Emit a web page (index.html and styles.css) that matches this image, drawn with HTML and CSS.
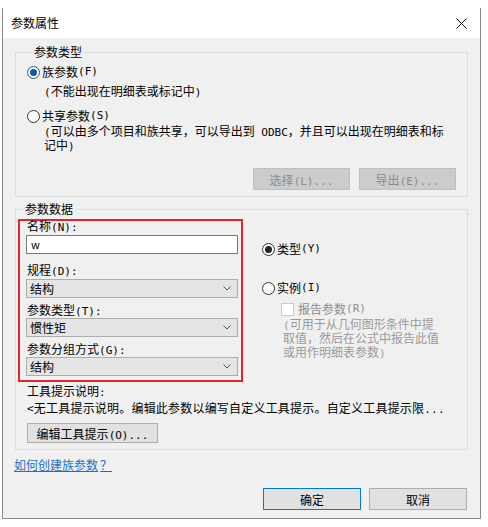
FILE: index.html
```html
<!DOCTYPE html>
<html lang="zh-CN">

<head>
    <meta charset="UTF-8" />
    <title>参数属性</title>
    <link rel="stylesheet" href="styles.css">
</head>

<body>
    <div class="dialog">
        <div class="titlebar">
            <span class="title">参数属性</span>
            <svg class="close" width="11" height="11" viewBox="0 0 11 11">
                <path d="M0.5 0.5 L10.5 10.5 M10.5 0.5 L0.5 10.5" stroke="#111" stroke-width="1" fill="none" />
            </svg>
        </div>

        <div class="content">
            <fieldset class="group type-group">
                <legend>参数类型</legend>
                <div class="option first">
                    <span class="radio checked focus"></span>族参数<span class="m">(F)</span>
                </div>
                <div class="note"><span class="m">(</span>不能出现在明细表或标记中<span class="m">)</span></div>
                <div class="option shared">
                    <span class="radio"></span>共享参数<span class="m">(S)</span>
                </div>
                <div class="note"><span class="m">(</span>可以由多个项目和族共享，可以导出到<span class="m"> ODBC</span>，并且可以出现在明细表和标<br>记中<span class="m">)</span></div>
                <div class="row-buttons">
                    <button class="btn disabled">选择<span class="m">(L)...</span></button>
                    <button class="btn disabled">导出<span class="m">(E)...</span></button>
                </div>
            </fieldset>

            <fieldset class="group data-group">
                <legend>参数数据</legend>
                <div class="data-grid">
                    <div class="fields">
                        <label class="field-label name-label">名称<span class="m">(N):</span></label>
                        <div class="textbox">w</div>

                        <label class="field-label gap-big">规程<span class="m">(D):</span></label>
                        <div class="select">结构
                            <svg width="8" height="5" viewBox="0 0 8 5"><path d="M0.5 0.5 L4 4 L7.5 0.5" stroke="#555" fill="none" /></svg>
                        </div>

                        <label class="field-label">参数类型<span class="m">(T):</span></label>
                        <div class="select">惯性矩
                            <svg width="8" height="5" viewBox="0 0 8 5"><path d="M0.5 0.5 L4 4 L7.5 0.5" stroke="#555" fill="none" /></svg>
                        </div>

                        <label class="field-label">参数分组方式<span class="m">(G):</span></label>
                        <div class="select">结构
                            <svg width="8" height="5" viewBox="0 0 8 5"><path d="M0.5 0.5 L4 4 L7.5 0.5" stroke="#555" fill="none" /></svg>
                        </div>
                    </div>

                    <div class="kind">
                        <div class="option type-opt">
                            <span class="radio checked"></span>类型<span class="m">(Y)</span>
                        </div>
                        <div class="option inst-opt">
                            <span class="radio"></span>实例<span class="m">(I)</span>
                        </div>
                        <div class="check-row">
                            <span class="checkbox"></span>报告参数<span class="m">(R)</span>
                        </div>
                        <div class="grey-note"><span class="m">(</span>可用于从几何图形条件中提<br>取值，然后在公式中报告此值<br>或用作明细表参数<span class="m">)</span></div>
                    </div>
                </div>

                <div class="tip-label">工具提示说明<span class="m">:</span></div>
                <div class="tip-text">&lt;无工具提示说明。编辑此参数以编写自定义工具提示。自定义工具提示限<span class="m">...</span></div>
                <button class="btn tip-btn">编辑工具提示<span class="m">(O)...</span></button>
            </fieldset>

            <a href="#" class="help">如何创建族参数<span class="q">？</span></a>

            <div class="actions">
                <button class="btn default">确定</button>
                <button class="btn">取消</button>
            </div>
        </div>
    </div>
</body>

</html>
```

FILE: styles.css
```css
* {
    box-sizing: border-box;
}

body {
    margin: 0;
    background-color: #ffffff;
    font-family: "Noto Sans CJK SC", "Noto Sans", sans-serif;
    font-size: 12px;
    line-height: 14px;
    color: #000;
}

/* latin bits of the labels are drawn half-width, like the dialog font */
.m {
    font-family: "DejaVu Sans Mono", monospace;
    font-size: 11px;
    line-height: 10px;
}

.dialog {
    margin: 8px 0 0 2px;
    width: 479px;
    height: 511px;
    border: 1px solid #8a8a8a;
    border-top: none;
    display: flex;
    flex-direction: column;
}

.titlebar {
    height: 30px;
    background-color: #fff;
    display: flex;
    justify-content: space-between;
    align-items: center;
    padding: 0 13px 0 8px;
}

.title {
    font-size: 12px;
}

.content {
    flex: 1;
    background-color: #f0f0f0;
    padding: 6px 12px 8px 12px;
    display: flex;
    flex-direction: column;
}

/* group boxes */
.group {
    margin: 0;
    min-inline-size: 0;
    border: 1px solid #dcdcdc;
    padding: 0 11px 6px 11px;
}

.group legend {
    margin-left: 5px;
    padding: 0 2px;
    line-height: 16px;
}

.option {
    display: flex;
    align-items: center;
    line-height: 16px;
}

.radio {
    width: 13px;
    height: 13px;
    border: 1px solid #333;
    border-radius: 50%;
    background-color: #fff;
    margin-right: 2px;
    position: relative;
    flex-shrink: 0;
}

.radio.checked::after {
    content: '';
    position: absolute;
    left: 2px;
    top: 2px;
    width: 7px;
    height: 7px;
    border-radius: 50%;
    background-color: #222;
}

.radio.focus {
    border-color: #0a5ca8;
}

.radio.focus::after {
    background-color: #0a5ca8;
}

.option.first {
    margin-top: 4px;
}

.option.shared {
    margin-top: 10px;
}

.note {
    padding-left: 17px;
}

.type-group .note:nth-of-type(2) {
    margin-top: 4px;
}

.row-buttons {
    display: flex;
    justify-content: flex-end;
    gap: 9px;
    margin-top: 16px;
}

.btn {
    font-family: inherit;
    font-size: 12px;
    height: 22px;
    width: 98px;
    padding: 0;
    background-color: #e1e1e1;
    border: 1px solid #adadad;
    color: #000;
}

.btn.disabled {
    background-color: #cccccc;
    border-color: #bfbfbf;
    color: #8a8a8a;
    width: 97px;
}

/* parameter data */
.data-group {
    margin-top: 4px;
    padding: 0 11px 6px 2px;
}

.data-grid {
    display: flex;
    gap: 19px;
}

.fields {
    width: 225px;
    margin-top: 2px;
    border: 2px solid #e32626;
    padding: 0 3px 4px 6px;
    display: flex;
    flex-direction: column;
}

.field-label {
    display: block;
    padding-left: 1px;
    margin-top: 5px;
    margin-bottom: 1px;
}

.field-label.name-label {
    margin-top: -2px;
    margin-bottom: 2px;
}

.field-label.gap-big {
    margin-top: 9px;
    margin-bottom: 2px;
}

.textbox {
    height: 19px;
    background-color: #fff;
    border: 1px solid #7a7a7a;
    padding: 0 4px;
    line-height: 17px;
    font-size: 11px;
}

.select {
    height: 19px;
    background-color: #e5e5e5;
    border: 1px solid #acacac;
    padding: 0 6px 0 3px;
    display: flex;
    justify-content: space-between;
    align-items: center;
}

.kind {
    flex: 1;
}

.type-opt {
    margin-top: 24px;
}

.inst-opt {
    margin-top: 23px;
}

.check-row {
    display: flex;
    align-items: center;
    margin-top: 5px;
    padding-left: 19px;
    line-height: 16px;
    color: #8c8c8c;
}

.checkbox {
    width: 13px;
    height: 13px;
    border: 1px solid #cccccc;
    background-color: #fff;
    margin-right: 4px;
}

.grey-note {
    padding-left: 21px;
    color: #9a9a9a;
}

.tip-label {
    margin-top: 2px;
    padding-left: 9px;
}

.tip-text {
    margin-top: 3px;
    padding-left: 9px;
    white-space: nowrap;
    letter-spacing: 0.2px;
}

.tip-btn {
    margin: 8px 0 0 9px;
    width: 131px;
    height: 20px;
}

.help {
    margin-top: 8px;
    margin-left: -1px;
    color: #1a6fc9;
    text-decoration: underline;
    align-self: flex-start;
}

.help .q {
    margin-left: 2px;
}

.actions {
    margin-top: auto;
    display: flex;
    justify-content: flex-end;
    gap: 8px;
    padding-right: 1px;
}

.btn.default {
    border-color: #0078d7;
}
```
